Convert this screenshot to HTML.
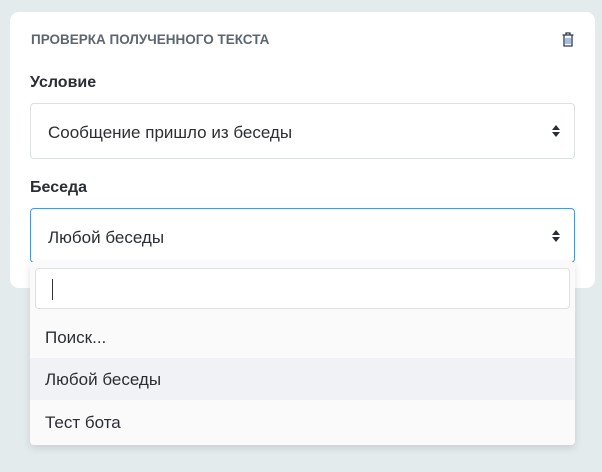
<!DOCTYPE html>
<html><head><meta charset="utf-8"><style>
*{box-sizing:border-box;margin:0;padding:0}
body{width:602px;height:472px;background:#e4ebed;font-family:"Liberation Sans","DejaVu Sans",sans-serif;position:relative;overflow:hidden;color:#2b2f33}
.card{position:absolute;left:10px;top:12px;width:585px;height:276px;background:#fff;border-radius:9px}
.title{position:absolute;left:31px;top:32px;font-size:13.5px;font-weight:bold;color:#5d6670}
.lbl{position:absolute;left:30px;font-size:16px;font-weight:bold;color:#2b2f33}
.sel{position:absolute;left:30px;width:545px;border:1px solid #dde1e4;border-radius:4px;background:#fff;font-size:17px;padding-left:17px;color:#2b2f33}
.arr{position:absolute;right:13px;top:50%;margin-top:-7px;width:10px;height:14px}
.dd{position:absolute;left:30px;top:262px;width:545px;height:183px;background:#fafafa;border-radius:0 0 4px 4px;box-shadow:0 3px 8px rgba(0,0,0,.12)}
.inp{position:absolute;left:5px;top:6px;width:535px;height:41px;border:1px solid #dde1e4;border-radius:4px;background:#fff}
.cur{position:absolute;left:16px;top:10px;width:1px;height:21px;background:#333}
.it{position:absolute;left:0;width:545px;height:42px;font-size:17px;padding-left:15px;line-height:44px}
</style></head><body>
<div class="card"></div>
<div class="title">ПРОВЕРКА ПОЛУЧЕННОГО ТЕКСТА</div>
<svg style="position:absolute;left:561px;top:32px" width="14" height="15" viewBox="0 0 14 15"><path d="M5 2.5V1h4v1.5M1.5 3h11M3 3.5v10.5h8V3.5" fill="none" stroke="#2d3a4a" stroke-width="1.3"/><path d="M5 6v6M7 6v6M9 6v6" stroke="#4a7bd0" stroke-width="1"/></svg>
<div class="lbl" style="top:74px">Условие</div>
<div class="sel" style="top:103px;height:56px;line-height:58px">Сообщение пришло из беседы<svg class="arr" viewBox="0 0 10 14"><path d="M1 6L5 1L9 6Z M1 8L5 13L9 8Z" fill="#2b2f33"/></svg></div>
<div class="lbl" style="top:179px">Беседа</div>
<div class="sel" style="top:208px;height:55px;line-height:57px;border-color:#4d94e8">Любой беседы<svg class="arr" viewBox="0 0 10 14"><path d="M1 6L5 1L9 6Z M1 8L5 13L9 8Z" fill="#2b2f33"/></svg></div>
<div class="dd">
<div class="inp"><div class="cur"></div></div>
<div class="it" style="top:54px">Поиск...</div>
<div class="it" style="top:96px;background:#f0f2f5">Любой беседы</div>
<div class="it" style="top:139px">Тест бота</div>
</div>
</body></html>
